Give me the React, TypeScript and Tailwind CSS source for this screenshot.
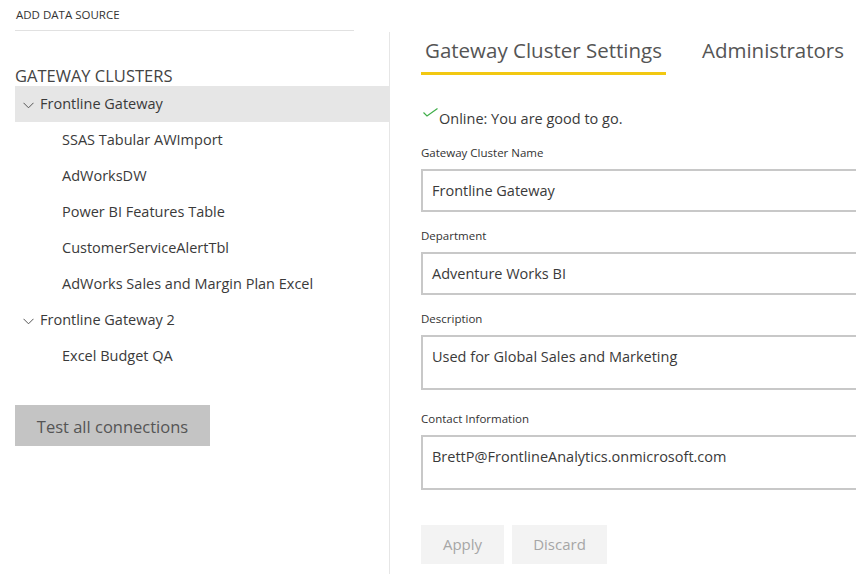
const sources = [
  'SSAS Tabular AWImport',
  'AdWorksDW',
  'Power BI Features Table',
  'CustomerServiceAlertTbl',
  'AdWorks Sales and Margin Plan Excel',
];

function Chevron() {
  return (
    <svg width="11" height="7" viewBox="0 0 11 7" fill="none" className="mt-[2px]">
      <polyline points="0.5,0.8 5.5,5.8 10.5,0.8" stroke="#555" strokeWidth="1" />
    </svg>
  );
}

function ClusterRow({ name, active }: { name: string; active?: boolean }) {
  return (
    <div className={`h-[36px] flex items-center pl-[8px] text-[14.5px] text-[#3a3a3a] ${active ? 'bg-[#e6e6e6]' : ''}`}>
      <Chevron />
      <span className="ml-[6px]">{name}</span>
    </div>
  );
}

function SourceRow({ name }: { name: string }) {
  return <div className="h-[36px] flex items-center pl-[47px] text-[14.5px] text-[#3a3a3a]">{name}</div>;
}

function Field({ label, value, tall, gap }: { label: string; value: string; tall?: boolean; gap: string }) {
  return (
    <div className={gap}>
      <div className="text-[11.5px] leading-[16px] text-[#333]">{label}</div>
      <div
        className={`mt-[8px] w-[470px] border-2 border-[#c8c8c8] pl-[9px] pt-[10px] text-[14.5px] leading-[20px] text-[#3a3a3a] ${
          tall ? 'h-[55px]' : 'h-[43px]'
        }`}
      >
        {value}
      </div>
    </div>
  );
}

export default function App() {
  return (
    <div className="w-[856px] h-[574px] overflow-hidden bg-white flex font-['Open_Sans',sans-serif]">
      <div className="w-[389px] shrink-0">
        <div className="ml-[15px] w-[339px] h-[31px] border-b border-[#e1e1e1] flex items-center pl-px text-[11.5px] text-[#333] uppercase">
          Add Data Source
        </div>
        <div className="ml-[15px]">
          <div className="mt-[35px] text-[16.5px] leading-[20px] text-[#444]">GATEWAY CLUSTERS</div>
          <ClusterRow name="Frontline Gateway" active />
          {sources.map((s) => (
            <SourceRow key={s} name={s} />
          ))}
          <ClusterRow name="Frontline Gateway 2" />
          <SourceRow name="Excel Budget QA" />
          <button className="mt-[31px] w-[195px] h-[41px] pt-[3px] bg-[#c4c4c4] text-[16.5px] text-[#555]">
            Test all connections
          </button>
        </div>
      </div>

      <div className="mt-[32px] flex-1 border-l border-[#e6e6e6] pl-[31px]">
        <div className="flex text-[20.5px] text-[#555] whitespace-nowrap">
          <div className="px-[4px] pt-[4px] pb-[8px] leading-[28px] border-b-[3px] border-[#f2c811]">
            Gateway Cluster Settings
          </div>
          <div className="ml-[32px] px-[4px] pt-[4px] leading-[28px]">Administrators</div>
        </div>

        <div className="mt-[34px] flex items-start text-[14.5px] leading-[20px] text-[#3a3a3a]">
          <svg width="15" height="9" viewBox="0 0 15 9" className="mt-[-1px] ml-[2px]" fill="none">
            <polyline points="0.5,4.5 4,8 14.5,0.5" stroke="#3fae49" strokeWidth="1.2" />
          </svg>
          <span className="ml-px">Online: You are good to go.</span>
        </div>

        <Field gap="mt-[16px]" label="Gateway Cluster Name" value="Frontline Gateway" />
        <Field gap="mt-[16px]" label="Department" value="Adventure Works BI" />
        <Field gap="mt-[16px]" label="Description" value="Used for Global Sales and Marketing" tall />
        <Field gap="mt-[21px]" label="Contact Information" value="BrettP@FrontlineAnalytics.onmicrosoft.com" tall />

        <div className="mt-[35px] flex gap-[8px] text-[15px] text-[#a6a6a6]">
          <button className="w-[83px] h-[39px] bg-[#f3f3f3]">Apply</button>
          <button className="w-[95px] h-[39px] bg-[#f3f3f3]">Discard</button>
        </div>
      </div>
    </div>
  );
}
